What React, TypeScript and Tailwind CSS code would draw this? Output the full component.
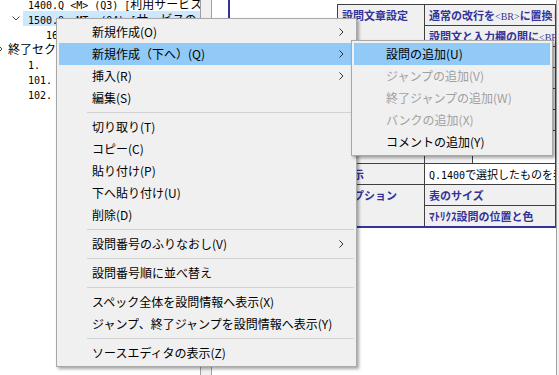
import React from "react";

const splitRuns = (s: string) => s.match(/[\x00-\x7f]+|[^\x00-\x7f]+/g) ?? [];

function TreeText({ text }: { text: string }) {
  return (
    <span className="whitespace-pre text-black">
      {splitRuns(text).map((p, i) =>
        /^[\x00-\x7f]/.test(p) ? (
          <span key={i} className="font-['DejaVu_Sans_Mono',monospace] text-[10px]">
            {p}
          </span>
        ) : (
          <span key={i} className="font-['Noto_Sans_CJK_JP',sans-serif] text-[12px]">
            {p}
          </span>
        )
      )}
    </span>
  );
}

function TreePane() {
  return (
    <div className="w-[200px] shrink-0 overflow-hidden bg-white">
      <div className="-mt-[4px] flex flex-col">
        <div className="h-[15px] leading-[15px] pl-[28px] whitespace-nowrap overflow-hidden">
          <TreeText text="1400.Q <M> (Q3) [利用サービス" />
        </div>
        <div className="h-[15px] flex items-center pl-[11px]">
          <div className="w-[12px] h-full flex items-center pl-[1px]">
            <svg width="8" height="5" viewBox="0 0 8 5">
              <path d="M0.5 0.5L4 4L7.5 0.5" fill="none" stroke="#404040" strokeWidth="1" />
            </svg>
          </div>
          <div className="flex-1 h-full bg-[#cce8ff] pl-[5px] leading-[15px] whitespace-nowrap overflow-hidden">
            <TreeText text="1500.Q <MT> (Q4) [サービスの" />
          </div>
        </div>
        <div className="h-[15px] leading-[15px] pl-[46px] whitespace-nowrap overflow-hidden">
          <TreeText text="16" />
        </div>
        <div className="h-[15px] flex items-center whitespace-nowrap overflow-hidden">
          <svg className="-ml-[2px] mr-[5px] shrink-0" width="5" height="8" viewBox="0 0 5 8">
            <path d="M0.5 0.5L4 4L0.5 7.5" fill="none" stroke="#404040" strokeWidth="1" />
          </svg>
          <span className="leading-[15px]">
            <TreeText text="終了セク" />
          </span>
        </div>
        <div className="h-[15px] leading-[15px] pl-[28px] whitespace-nowrap overflow-hidden">
          <TreeText text="1." />
        </div>
        <div className="h-[15px] leading-[15px] pl-[28px] whitespace-nowrap overflow-hidden">
          <TreeText text="101." />
        </div>
        <div className="h-[15px] leading-[15px] pl-[28px] whitespace-nowrap overflow-hidden">
          <TreeText text="102." />
        </div>
      </div>
    </div>
  );
}

const cellBase =
  "border-r border-b border-[#404040] overflow-hidden whitespace-nowrap px-[4px] leading-[20px] text-[11px]";

function Br() {
  return <span className="font-['Liberation_Serif',serif] font-normal text-[10px]">&lt;BR&gt;</span>;
}

function SpecTable() {
  return (
    <div className="ml-[107px] mt-[4px] w-max grid grid-cols-[87px_48px_83px] grid-rows-[21px_21px_21px_21px_21px_21px_33px_21px_21px_20px] border-l border-t border-[#404040] font-['Noto_Sans_CJK_JP',sans-serif] font-bold text-[#333399]">
      <div className={`${cellBase} row-span-2 bg-[#f0f0f0]`}>設問文章設定</div>
      <div className={`${cellBase} col-span-2 bg-[#f0f0f0]`}>
        通常の改行を<Br />に置換し
      </div>
      <div className={`${cellBase} col-span-2 bg-[#f0f0f0]`}>
        設問文と入力欄の間に<Br />
      </div>
      <div className={`${cellBase} row-span-4 bg-[#f0f0f0]`} />
      <div className={`${cellBase} col-span-2 bg-[#f0f0f0]`} />
      <div className={`${cellBase} col-span-2 bg-[#f0f0f0]`} />
      <div className={`${cellBase} col-span-2 bg-[#f0f0f0]`} />
      <div className={`${cellBase} col-span-2 bg-[#f0f0f0]`} />
      <div className={`${cellBase} bg-[#f0f0f0]`} />
      <div className={`${cellBase} bg-[#f0f0f0]`} />
      <div className={`${cellBase} bg-white`} />
      <div className={`${cellBase} bg-[#f0f0f0]`}>表示</div>
      <div className={`${cellBase} col-span-2 bg-white font-normal text-black`}>
        <span className="font-['DejaVu_Sans_Mono',monospace] text-[10px]">Q.1400</span>
        で選択したものを表
      </div>
      <div className={`${cellBase} row-span-2 border-b-0 bg-[#f0f0f0]`}>オプション</div>
      <div className={`${cellBase} col-span-2 bg-[#f0f0f0]`}>表のサイズ</div>
      <div className={`${cellBase} col-span-2 border-b-0 bg-[#f0f0f0]`}>ﾏﾄﾘｸｽ設問の位置と色</div>
    </div>
  );
}

function Chevron() {
  return (
    <svg width="5" height="8" viewBox="0 0 5 8" className="shrink-0">
      <path d="M0.5 0.5L4 4L0.5 7.5" fill="none" stroke="#333333" strokeWidth="1" />
    </svg>
  );
}

type Item = { t: string; sub?: boolean; hl?: boolean; dis?: boolean } | "sep";

const mainItems: Item[] = [
  { t: "新規作成(O)", sub: true },
  { t: "新規作成（下へ）(Q)", sub: true, hl: true },
  { t: "挿入(R)", sub: true },
  { t: "編集(S)" },
  "sep",
  { t: "切り取り(T)" },
  { t: "コピー(C)" },
  { t: "貼り付け(P)" },
  { t: "下へ貼り付け(U)" },
  { t: "削除(D)" },
  "sep",
  { t: "設問番号のふりなおし(V)", sub: true },
  "sep",
  { t: "設問番号順に並べ替え" },
  "sep",
  { t: "スペック全体を設問情報へ表示(X)" },
  { t: "ジャンプ、終了ジャンプを設問情報へ表示(Y)" },
  "sep",
  { t: "ソースエディタの表示(Z)" },
];

const subItems: Item[] = [
  { t: "設問の追加(U)", hl: true },
  { t: "ジャンプの追加(V)", dis: true },
  { t: "終了ジャンプの追加(W)", dis: true },
  { t: "バンクの追加(X)", dis: true },
  { t: "コメントの追加(Y)" },
];

function MenuRows({ items, pl }: { items: Item[]; pl: "main" | "sub" }) {
  return (
    <>
      {items.map((it, i) =>
        it === "sep" ? (
          <div key={i} className="h-[7px] flex items-center pl-[28px]">
            <div className="h-px w-full bg-[#d2d2d2]" />
          </div>
        ) : (
          <div
            key={i}
            className={`h-[22px] flex items-center justify-between pr-[10px] ${
              pl === "main" ? "pl-[33px]" : "pl-[32px]"
            } ${it.hl ? "bg-[#91c9f7]" : ""} ${it.dis ? "text-[#a0a0a0]" : "text-black"}`}
          >
            <span className="whitespace-nowrap">{it.t}</span>
            {it.sub && <Chevron />}
          </div>
        )
      )}
    </>
  );
}

export default function App() {
  return (
    <div className="relative w-[559px] h-[375px] overflow-hidden bg-white flex">
      <TreePane />
      <div className="w-[12px] shrink-0 bg-[#f0f0f0] border-l border-r border-[#a0a0a0]" />
      <div className="flex-1 flex min-w-0">
        <div className="w-[16px] shrink-0" />
        <div className="flex-1 min-w-0 self-start border-l-2 border-b-2 border-[#333399] overflow-hidden">
          <SpecTable />
        </div>
        <div className="w-[3px] shrink-0 bg-[#f0f0f0] border-l border-[#a0a0a0] relative z-10" />
      </div>

      <div className="absolute left-[56px] top-[18px] w-[301px] bg-[#f0f0f0] border border-[#a8a8a8] shadow-[2px_2px_3px_rgba(0,0,0,0.35)] p-[2px] font-['Noto_Sans_CJK_JP',sans-serif] text-[12px] z-20">
        <MenuRows items={mainItems} pl="main" />
      </div>

      <div className="absolute left-[351px] top-[40px] w-[202px] bg-[#f0f0f0] border border-[#a8a8a8] shadow-[2px_2px_3px_rgba(0,0,0,0.35)] p-[2px] font-['Noto_Sans_CJK_JP',sans-serif] text-[12px] z-30">
        <MenuRows items={subItems} pl="sub" />
      </div>
    </div>
  );
}
